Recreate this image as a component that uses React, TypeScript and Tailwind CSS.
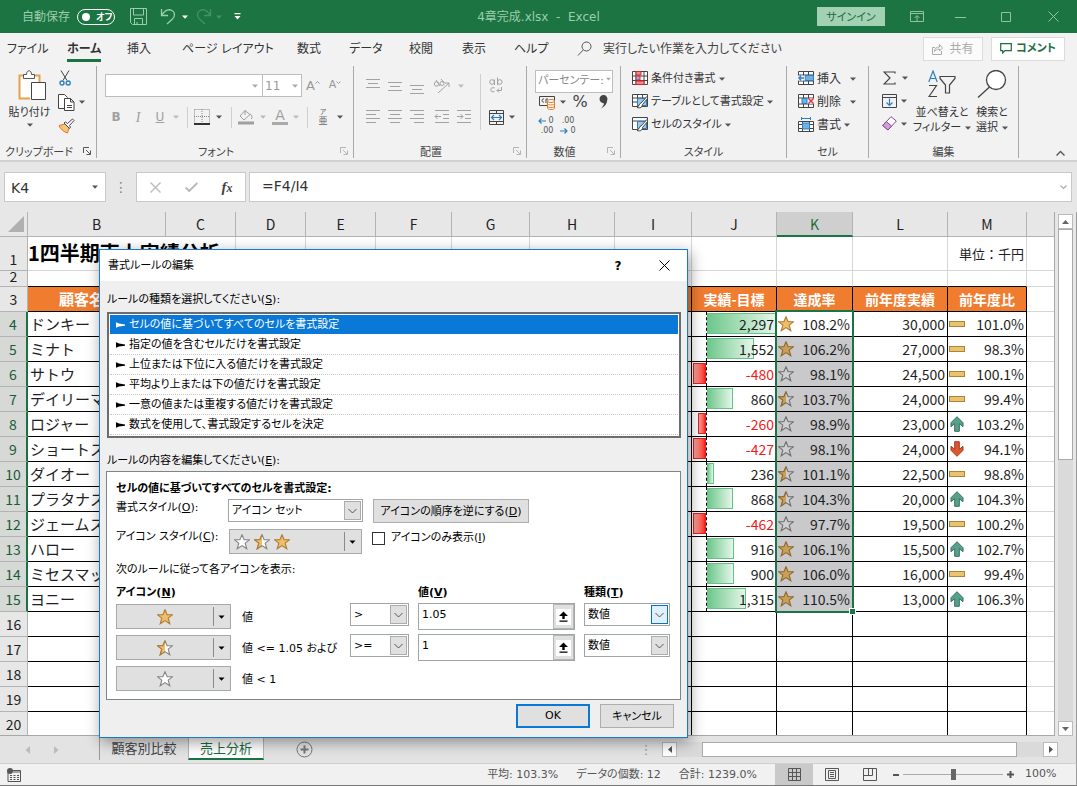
import React from "react";

const UI = "font-['DejaVu_Sans','Noto_Sans_CJK_JP',sans-serif] [font-feature-settings:'palt']";

/* ---------- small shared drawings ---------- */

function Caret({ color = "#555", size = 6 }: { color?: string; size?: number }) {
  return (
    <svg width={size} height="4" viewBox="0 0 6 4" aria-hidden="true" className="shrink-0">
      <path d="M0 0.5h6L3 3.8z" fill={color} />
    </svg>
  );
}

function CaretSlot({ w, color }: { w: string; color?: string }) {
  return (
    <span className={`flex shrink-0 items-center justify-center ${w}`}>
      <Caret color={color} />
    </span>
  );
}

function Slot({ w, label, children }: { w: string; label: string; children: React.ReactNode }) {
  return (
    <button type="button" aria-label={label} className={`flex shrink-0 items-center justify-center ${w}`}>
      {children}
    </button>
  );
}

const STAR = "M8 0.8l2.1 5h5.2l-4.1 3.4 1.6 5.6L8 11.6l-4.8 3.2 1.6-5.6L0.7 5.8h5.2z";

type StarKind = "full" | "half" | "empty";

function Star({ kind, dim = false }: { kind: StarKind; dim?: boolean }) {
  const gold = dim ? "#c9a057" : "#f0bd68";
  const edge = dim ? "#8f6a2c" : "#ad7c34";
  const pale = dim ? "#d0d0d2" : "#ffffff";
  const grey = dim ? "#6f6f70" : "#848484";
  return (
    <svg width="16" height="16" viewBox="0 0 16 16" aria-hidden="true" className="shrink-0">
      <path d={STAR} fill={kind === "full" ? gold : pale} stroke={kind === "full" ? edge : grey} strokeWidth="1.1" />
      {kind === "half" && (
        <>
          <path d="M8 0.8v10.8l-4.8 3.2 1.6-5.6L0.7 5.8h5.2z" fill={gold} />
          <path d="M8 0.8L5.9 5.8H0.7l4.1 3.4-1.6 5.6L8 11.6" fill="none" stroke={edge} strokeWidth="1.1" />
        </>
      )}
    </svg>
  );
}

type Trend = "flat" | "up" | "down";

function TrendIcon({ kind }: { kind: Trend }) {
  if (kind === "flat") {
    return (
      <svg width="16" height="16" viewBox="0 0 16 16" aria-hidden="true">
        <rect x="0.5" y="5.5" width="15" height="5" fill="#ebc26e" stroke="#a98538" />
      </svg>
    );
  }
  const up = kind === "up";
  return (
    <svg width="16" height="16" viewBox="0 0 16 16" aria-hidden="true">
      <path
        d={up ? "M8 0.7l6 6v4l-3.7-3v7.6H5.7V7.7l-3.7 3v-4z" : "M8 15.3l6-6v-4l-3.7 3V0.7H5.7v7.6l-3.7-3v4z"}
        fill={up ? "#58a08a" : "#dc5630"}
        stroke={up ? "#34705f" : "#a53a1c"}
      />
    </svg>
  );
}

/* ---------- title bar ---------- */

function TitleBar() {
  return (
    <header className="grid h-[33px] shrink-0 grid-cols-[1fr_auto_1fr] items-center bg-[#1c7442] text-[12px] text-[#9bcdae]">
      <div className="flex items-center pl-[22px]">
        <span className="w-[55px]">自動保存</span>
        <button
          type="button"
          role="switch"
          aria-checked="false"
          aria-label="自動保存"
          className="flex h-4 w-[38px] items-center rounded-full border border-white pl-1 text-white"
        >
          <span className="size-2 rounded-full bg-white" />
          <span className="ml-1.5 pt-0.5 text-[9px] font-bold leading-none">オフ</span>
        </button>
        <Slot w="ml-3.5 w-[18px]" label="上書き保存">
          <svg width="17" height="17" viewBox="0 0 17 17" fill="none" stroke="#9bcdae">
            <path d="M0.5 0.5h16v16h-14l-2-2zM3.5 0.5v6.5h10V0.5M4.5 16.5v-6h8v6M7 14v2.5" />
          </svg>
        </Slot>
        <Slot w="ml-3 w-[18px]" label="元に戻す">
          <svg width="16" height="17" viewBox="0 0 16 17" fill="none" stroke="#9bcdae" strokeWidth="1.3">
            <path d="M1.5 1v6.5H8M1.5 7.5C5 2 9 1 12 2.500c3.500 2 3 6 0.500 8.500L7 16" />
          </svg>
        </Slot>
        <CaretSlot w="w-4" color="#ffffff" />
        <Slot w="ml-0.5 w-[18px]" label="やり直し">
          <svg width="16" height="17" viewBox="0 0 16 17" fill="none" stroke="#46906a" strokeWidth="1.3">
            <path d="M14.500 1v6.500H8M14.500 7.500C11 2 7 1 4 2.500c-3.500 2-3 6-0.500 8.500L9 16" />
          </svg>
        </Slot>
        <CaretSlot w="w-3" color="#46906a" />
        <Slot w="ml-1 w-4" label="クイック アクセス ツール バーのユーザー設定">
          <svg width="7" height="7" viewBox="0 0 7 7">
            <path d="M0.500 0h6v1.200h-6zM0.500 3h6L3.500 6.500z" fill="#fff" />
          </svg>
        </Slot>
      </div>
      <h1 className="whitespace-pre">4章完成.xlsx  -  Excel</h1>
      <div className="flex items-center justify-end pr-2">
        <button type="button" className="mr-3 h-[19px] w-[68px] bg-[#a3d1b4] pt-0.5 text-[11px] leading-none text-[#1d6b3f]">
          サインイン
        </button>
        <Slot w="w-10" label="リボンの表示オプション">
          <svg width="14" height="11" viewBox="0 0 14 11" fill="none" stroke="#8fc4a3">
            <path d="M0.500 0.500h13v10H0.500zM0.500 2.500h13M7 10V5M4.500 7L7 4.500 9.500 7" />
          </svg>
        </Slot>
        <Slot w="w-[46px]" label="最小化">
          <svg width="11" height="11" viewBox="0 0 11 11" stroke="#8fc4a3">
            <path d="M0 6.500h11" />
          </svg>
        </Slot>
        <Slot w="w-[46px]" label="最大化">
          <svg width="10" height="10" viewBox="0 0 10 10" fill="none" stroke="#8fc4a3">
            <path d="M0.500 0.500h9v9h-9z" />
          </svg>
        </Slot>
        <Slot w="ml-2 w-8" label="閉じる">
          <svg width="11" height="11" viewBox="0 0 11 11" stroke="#8fc4a3">
            <path d="M0.500 0.500l10 10M10.500 0.500l-10 10" />
          </svg>
        </Slot>
      </div>
    </header>
  );
}

/* ---------- ribbon tabs ---------- */

const TABS = [
  { name: "ファイル", w: "w-[60px]" },
  { name: "ホーム", w: "w-[60px]", active: true },
  { name: "挿入", w: "w-[55px]" },
  { name: "ページ レイアウト", w: "w-[115px]" },
  { name: "数式", w: "w-[52px]" },
  { name: "データ", w: "w-[60px]" },
  { name: "校閲", w: "w-[53px]" },
  { name: "表示", w: "w-[52px]" },
  { name: "ヘルプ", w: "w-[63px]" },
];

function RibbonTabs() {
  return (
    <nav className="flex h-[33px] shrink-0 items-center bg-[#f2f2f3] pb-0.5 pl-[7px] text-[12px] text-[#333]">
      {TABS.map((t) => (
        <a key={t.name} href="#" className={`block shrink-0 whitespace-nowrap ${t.w}`}>
          <span
            className={
              t.active
                ? "inline-block border-b-[3px] border-[#1a7343] pt-[3px] font-bold leading-5"
                : "inline-block leading-[22px]"
            }
          >
            {t.name}
          </span>
        </a>
      ))}
      <svg width="16" height="16" viewBox="0 0 16 16" fill="none" stroke="#555" className="shrink-0">
        <circle cx="9.500" cy="5.500" r="4.500" />
        <path d="M6.200 9L1 14.500" />
      </svg>
      <span className="ml-2.5 whitespace-nowrap text-[#444]">実行したい作業を入力してください</span>
      <div className="ml-auto flex gap-2 pr-3">
        <button type="button" className="flex h-6 w-[60px] items-center justify-center gap-1.5 border border-[#dcdcdc] bg-[#fbfbfb] text-[12px] text-[#aaa]">
          <svg width="11" height="12" viewBox="0 0 11 12" fill="none" stroke="#aaa">
            <path d="M3 4.500H0.500v7h9V8M2.500 8.500c0-3 2-4.500 5-4.500V1.500L10.500 5 7.500 8V6C5 6 3.500 7 2.500 8.500z" />
          </svg>
          共有
        </button>
        <button type="button" className="flex h-6 w-[74px] items-center justify-center gap-1 border border-[#dcdcdc] bg-white text-[11px] font-bold text-[#1e6e42]">
          <svg width="12" height="11" viewBox="0 0 12 11" fill="none" stroke="#1e6e42" strokeWidth="1.200">
            <path d="M0.700 0.700h10.600v7H5L2.700 10V7.700h-2z" />
          </svg>
          <span className="pt-0.5">コメント</span>
        </button>
      </div>
    </nav>
  );
}

/* ---------- ribbon ---------- */

function Group({
  w,
  label,
  launcher,
  children,
}: {
  w: string;
  label: string;
  launcher?: "on" | "off";
  children: React.ReactNode;
}) {
  return (
    <section aria-label={label} className={`flex shrink-0 flex-col border-r border-[#a9a9a9] ${w}`}>
      <div className="h-[77px]">{children}</div>
      <div className="flex h-[15px] items-center text-[11px] leading-[15px] text-[#444]">
        <span className="flex-1 whitespace-nowrap pt-1 text-center">{label}</span>
        {launcher && (
          <button type="button" aria-label={`${label}の設定`} className="flex w-[18px] justify-center">
            <svg width="8" height="8" viewBox="0 0 8 8" fill="none" stroke={launcher === "on" ? "#555" : "#b5b5b5"}>
              <path d="M0.500 6V0.500H6M3 3l4 4M7.500 3.500v4h-4" />
            </svg>
          </button>
        )}
      </div>
    </section>
  );
}

function Lines({ d, color = "#a2a2a2" }: { d: string; color?: string }) {
  return (
    <svg width="16" height="16" viewBox="0 0 16 16" fill="none" stroke={color}>
      <path d={d} />
    </svg>
  );
}

const Sep = ({ w }: { w: string }) => (
  <span className={`flex shrink-0 justify-center ${w}`}>
    <span className="h-[21px] w-px bg-[#cfcfcf]" />
  </span>
);

function ClipboardGroup() {
  return (
    <Group w="w-[97px]" label="クリップボード" launcher="on">
      <div className="flex">
        <button type="button" className="flex w-[56px] flex-col items-center pl-[3px] pt-1 text-[11px] leading-[17px] text-[#333]">
          <svg width="28" height="32" viewBox="0 0 28 32" fill="none" className="ml-1">
            <path d="M12 28.500H1.500V5.500h20V13" stroke="#e8a04a" strokeWidth="2" fill="#fff" />
            <path d="M5.500 8.500v-4h3c0-5 5-5 5 0h3v4z" fill="#fff" stroke="#555" />
            <path d="M13.500 12.500h14v17h-14z" fill="#fff" stroke="#444" />
          </svg>
          <span className="mt-0.5 whitespace-nowrap">貼り付け</span>
          <span className="mt-0.5"><Caret /></span>
        </button>
        <div className="flex flex-col">
          <Slot w="h-6 w-[18px]" label="切り取り">
            <svg width="12" height="16" viewBox="0 0 12 16" fill="none">
              <path d="M2 0.500l6 10M10 0.500L4 10.500" stroke="#444" />
              <circle cx="3" cy="13" r="2" stroke="#2b7fc4" strokeWidth="1.400" />
              <circle cx="9.200" cy="13" r="2" stroke="#2b7fc4" strokeWidth="1.400" />
            </svg>
          </Slot>
          <div className="flex items-center">
            <Slot w="h-6 w-[20px]" label="コピー">
              <svg width="17" height="17" viewBox="0 0 17 17" fill="#fff" stroke="#444">
                <path d="M0.500 14.500V0.500h6l3 3v11z" />
                <path d="M6.500 4.500h6l3.500 3.500v8.500H6.500zM12.500 4.500v3.500H16M9 11.500h5M9 13.500h5" />
              </svg>
            </Slot>
            <CaretSlot w="w-3" />
          </div>
          <Slot w="h-6 w-[20px]" label="書式のコピー/貼り付け">
            <svg width="17" height="16" viewBox="0 0 17 16" fill="none">
              <path d="M1 7.500l6-1.500 4 4-1.500 5C6 14 2.500 11.500 1 7.500z" fill="#f7c27d" stroke="#e07b26" />
              <path d="M6 5l5.500 5.500 1-1.500-1-1.500L16 2.500 14.500 1 9.500 5.500 7.500 4z" fill="#fff" stroke="#444" />
            </svg>
          </Slot>
        </div>
      </div>
    </Group>
  );
}

function FontGroup() {
  return (
    <Group w="w-[257px]" label="フォント" launcher="off">
      <div className="flex flex-col gap-2 pl-2 pt-2">
        <div className="flex h-[23px] items-stretch text-[#999]">
          <div className="flex w-[158px] items-center border border-[#bdbdbd] bg-white">
            <input aria-label="フォント名" className="h-full w-[146px] bg-transparent px-1 text-[12px]" />
            <Caret color="#aaa" />
          </div>
          <div className="flex w-[39px] items-center border border-l-0 border-[#bdbdbd] bg-white">
            <input aria-label="フォント サイズ" defaultValue="11" className="h-full w-[29px] bg-transparent pl-0.5 text-[12px] text-[#999]" />
            <Caret color="#aaa" />
          </div>
          <Slot w="w-[22px]" label="フォント サイズの拡大">
            <span className="text-[13px]">A</span>
            <svg width="5" height="14" viewBox="0 0 5 14" fill="none" stroke="#999"><path d="M0.500 4.500l2-2 2 2" /></svg>
          </Slot>
          <Slot w="w-[22px]" label="フォント サイズの縮小">
            <span className="text-[11px]">A</span>
            <svg width="5" height="14" viewBox="0 0 5 14" fill="none" stroke="#999"><path d="M0.500 2.500l2 2 2-2" /></svg>
          </Slot>
        </div>
        <div className="flex h-6 items-center text-[12px] text-[#a0a0a0]">
          <Slot w="w-[22px]" label="太字"><b>B</b></Slot>
          <Slot w="w-[22px]" label="斜体"><i className="font-['Liberation_Serif',serif] text-[14px]">I</i></Slot>
          <Slot w="w-[22px]" label="下線"><u>U</u></Slot>
          <CaretSlot w="w-2.5" color="#bbb" />
          <Sep w="w-3" />
          <Slot w="w-[18px]" label="罫線">
            <svg width="16" height="16" viewBox="0 0 16 16" fill="none">
              <path d="M0.500 0.500h15v14M0.500 0.500v14M8 0v14M0 7.500h16" stroke="#888" strokeDasharray="1 1" />
              <path d="M0 15h16" stroke="#333" strokeWidth="2" />
            </svg>
          </Slot>
          <CaretSlot w="w-4" />
          <Sep w="w-2" />
          <Slot w="w-[22px]" label="塗りつぶしの色">
            <svg width="16" height="16" viewBox="0 0 16 16" fill="none" stroke="#a0a0a0">
              <path d="M7 1.500L2 7l4 4 6-5.500zM7 1v5M12 5c2 1 2.500 3 1.500 5" />
              <path d="M0 14h16" strokeWidth="3" />
            </svg>
          </Slot>
          <CaretSlot w="w-3" color="#bbb" />
          <Slot w="w-[22px] flex-col" label="フォントの色">
            <span className="text-[14px] leading-[13px]">A</span>
            <span className="h-[3px] w-4 bg-[#a9a9a9]" />
          </Slot>
          <CaretSlot w="w-2.5" color="#bbb" />
          <Sep w="w-3" />
          <Slot w="w-5 flex-col" label="ふりがなの表示">
            <span className="text-[7px] leading-[8px] text-[#666]">ア</span>
            <span className="text-[9px] leading-[10px] text-[#666]">亜</span>
          </Slot>
          <CaretSlot w="w-3.5" />
        </div>
      </div>
    </Group>
  );
}

function AlignGroup() {
  return (
    <Group w="w-[173px]" label="配置" launcher="off">
      <div className="flex pl-2 pt-2">
        <div className="flex w-[110px] flex-col gap-2">
          <div className="flex h-[23px] items-center">
            <Slot w="w-[22px]" label="上揃え"><Lines d="M1 1.500h14M3 5.500h10M1 9.500h14" /></Slot>
            <Slot w="w-[22px]" label="上下中央揃え"><Lines d="M1 4.500h14M3 8.500h10M1 12.500h14" /></Slot>
            <Slot w="w-[22px]" label="下揃え"><Lines d="M1 7.500h14M3 11.500h10M1 15.500h14" /></Slot>
            <Slot w="w-7" label="方向">
              <svg width="18" height="16" viewBox="0 0 18 16" fill="none" stroke="#a2a2a2">
                <circle cx="3.500" cy="6" r="2.200" />
                <path d="M3 2l4 6M8 1l3.500 4M5 15L16 5M16 9V5h-4" />
                <circle cx="9" cy="5.500" r="2" />
              </svg>
            </Slot>
            <CaretSlot w="w-2.5" color="#bbb" />
          </div>
          <div className="flex h-6 items-center">
            <Slot w="w-[22px]" label="左揃え"><Lines d="M1 1.500h14M1 5.500h10M1 9.500h14M1 13.500h10" /></Slot>
            <Slot w="w-[22px]" label="中央揃え"><Lines d="M1 1.500h14M3 5.500h10M1 9.500h14M3 13.500h10" /></Slot>
            <Slot w="w-[22px]" label="右揃え"><Lines d="M1 1.500h14M5 5.500h10M1 9.500h14M5 13.500h10" /></Slot>
            <Slot w="w-7" label="インデントを減らす"><Lines d="M1 1.500h14M9 5.500h6M9 9.500h6M1 13.500h14M7 7.500H1M3.500 5L1 7.500 3.500 10" /></Slot>
            <Slot w="w-4" label="インデントを増やす"><Lines d="M1 1.500h14M9 5.500h6M9 9.500h6M1 13.500h14M1 7.500h6M4.500 5L7 7.500 4.500 10" /></Slot>
          </div>
        </div>
        <span className="flex w-4 justify-center"><span className="h-[56px] w-px bg-[#cfcfcf]" /></span>
        <div className="flex flex-col gap-2">
          <Slot w="h-[23px] w-4" label="折り返して全体を表示する">
            <svg width="14" height="17" viewBox="0 0 14 17" fill="none" stroke="#a2a2a2">
              <circle cx="3" cy="5" r="2.300" />
              <path d="M5.500 2.500v5.500M8.500 0.500v7.500" />
              <circle cx="10.800" cy="5" r="2.300" />
              <path d="M5.500 11c-5-2-5 5.500 0 3.500M12.500 10v3.500H8M10 11.500l-2 2 2 2" />
            </svg>
          </Slot>
          <div className="flex h-6 items-center">
            <Slot w="w-4" label="セルを結合して中央揃え">
              <svg width="15" height="15" viewBox="0 0 15 15" fill="none">
                <path d="M0.500 0.500h14v14H0.500zM0.500 3.500h14M0.500 11.500h14M7.500 0.500v3M7.500 11.500v3" stroke="#444" />
                <path d="M2.500 7.500h10M5 5L2.500 7.500 5 10M10 5l2.500 2.500L10 10" stroke="#2b7fc4" strokeWidth="1.200" />
              </svg>
            </Slot>
            <CaretSlot w="w-4" />
          </div>
        </div>
      </div>
    </Group>
  );
}

function NumberGroup() {
  return (
    <Group w="w-[94px]" label="数値" launcher="off">
      <div className="flex flex-col pl-2 pt-px">
        <div className="relative h-[23px] w-[78px]">
          <select aria-label="表示形式" className="h-[23px] w-[78px] appearance-none overflow-hidden border border-[#bdbdbd] bg-white pl-0.5 pr-2 text-[11px] text-[#888]">
            <option>パーセンテー:</option>
          </select>
          <span className="pointer-events-none absolute right-0.5 top-2.5"><Caret color="#aaa" size={5} /></span>
        </div>
        <div className="flex h-6 items-center text-[#444]">
          <Slot w="w-6" label="通貨表示形式">
            <svg width="17" height="15" viewBox="0 0 17 15" fill="none">
              <path d="M0.500 1.500h15v9H0.500zM5 4c-2.500-1-2.500 4 0 3M7 8V4h2" stroke="#444" />
              <path d="M8.500 6v7c0 2 7 2 7 0V6M8.500 8.500c0 2 7 2 7 0M8.500 11c0 2 7 2 7 0" fill="#fff" stroke="#e07b26" />
              <ellipse cx="12" cy="6" rx="3.500" ry="1.500" fill="#fff" stroke="#e07b26" />
            </svg>
          </Slot>
          <CaretSlot w="w-2" />
          <Slot w="w-[26px]" label="パーセント スタイル"><span className="text-[16px]">%</span></Slot>
          <Slot w="w-5" label="桁区切りスタイル">
            <svg width="9" height="14" viewBox="0 0 8 12"><path d="M0.500 3.500a3.500 3.500 0 1 1 6.800 1C7 8 5 10.500 1.500 11.800 3.500 10 4.500 8.500 4.300 7A3.500 3.500 0 0 1 0.500 3.500z" fill="#444" /></svg>
          </Slot>
        </div>
        <div className="flex h-6 items-center text-[8px] leading-[10px] text-[#555]">
          <Slot w="w-[22px] flex-col" label="小数点以下の表示桁数を増やす">
            <span className="flex items-center gap-0.5">
              <svg width="8" height="6" viewBox="0 0 8 6" fill="none" stroke="#2b7fc4" strokeWidth="1.200"><path d="M8 3H1M3.500 0.500L1 3l2.500 2.500" /></svg>0
            </span>
            <span className="pl-0.5">.00</span>
          </Slot>
          <Slot w="w-[22px] flex-col" label="小数点以下の表示桁数を減らす">
            <span>.00</span>
            <span className="flex items-center gap-0.5">
              <svg width="8" height="6" viewBox="0 0 8 6" fill="none" stroke="#2b7fc4" strokeWidth="1.200"><path d="M0 3h7M4.500 0.500L7 3 4.500 5.500" /></svg>0
            </span>
          </Slot>
        </div>
      </div>
    </Group>
  );
}

function GridIcon({ kind }: { kind: "cond" | "table" | "style" | "insert" | "delete" | "format" }) {
  return (
    <svg width="16" height="15" viewBox="0 0 16 15" fill="none" className="shrink-0">
      {kind === "cond" && (
        <>
          <path d="M0.500 0.500h15v13H0.500zM0.500 5h15M0.500 9.500h15M4 0.500v13M12 0.500v13" fill="#fff" stroke="#444" />
          <path d="M4 0.500h5V4H4zM4 10h8v3.500H4z" fill="#f3868a" stroke="#d8272e" />
          <path d="M4 5h4v4H4z" fill="#7fb7e6" stroke="#d8272e" />
        </>
      )}
      {(kind === "table" || kind === "style") && (
        <>
          <path d="M0.500 0.500h15v12H0.500zM0.500 4h15" fill="#fff" stroke="#444" />
          {kind === "table" && <path d="M0.500 8h15M5.500 0.500v12M10.500 0.500v12" stroke="#444" />}
          <path d="M5.500 4.500h9v7h-9z" fill="#9cc8ec" stroke="#2b7fc4" />
          <path d="M15 2.500L9 9c-2 0.500-1.500 3-4 4.500 3 1 5.500 0 5.500-3L16 4z" fill="#fff" stroke="#444" />
        </>
      )}
      {kind === "insert" && (
        <>
          <path d="M0.500 0.500h15v13H0.500zM0.500 4h15M0.500 10h15M5.500 0.500v13M10.500 0.500v13" fill="#fff" stroke="#444" />
          <path d="M7 4.500h8.500v5H7z" fill="#6fb0e6" stroke="#2b7fc4" />
          <path d="M0 4.600h6.500v5H0z" fill="#f2f2f3" />
          <path d="M6 7H0.800M3.200 4.500L0.800 7l2.400 2.500" stroke="#2b7fc4" strokeWidth="1.300" />
        </>
      )}
      {kind === "delete" && (
        <>
          <path d="M0.500 0.500h15v13H0.500zM0.500 4h15M0.500 10h15M5.500 0.500v13M10.500 0.500v13" fill="#fff" stroke="#444" />
          <path d="M4 4.500h5v5H4z" fill="#6fb0e6" stroke="#2b7fc4" />
          <path d="M10 4.600h6v5h-6z" fill="#f2f2f3" />
          <path d="M10.500 4.500l5 5M15.500 4.500l-5 5" stroke="#e0343b" strokeWidth="1.400" />
        </>
      )}
      {kind === "format" && (
        <>
          <path d="M0.500 4.500h15v10H0.500zM0.500 7.500h15M0.500 11.500h15M4.500 4v10.500M11.500 4v10.500" fill="#fff" stroke="#444" />
          <path d="M4.500 6h7v6h-7z" fill="#6fb0e6" stroke="#2b7fc4" />
          <path d="M3.500 1.500h9M3.500 0v3M12.500 0v3" stroke="#2b7fc4" />
        </>
      )}
    </svg>
  );
}

function StyleGroup() {
  return (
    <Group w="w-[166px]" label="スタイル">
      <div className="flex flex-col pl-[11px] pt-px text-[11px] text-[#333]">
        {(
          [
            ["cond", "条件付き書式"],
            ["table", "テーブルとして書式設定"],
            ["style", "セルのスタイル"],
          ] as const
        ).map(([kind, name]) => (
          <button key={kind} type="button" className="flex h-[23px] items-center gap-[3px] whitespace-nowrap">
            <GridIcon kind={kind} />
            <span className="pt-0.5">{name}</span>
            <Caret />
          </button>
        ))}
      </div>
    </Group>
  );
}

function CellGroup() {
  return (
    <Group w="w-[82px]" label="セル">
      <div className="flex flex-col pl-[11px] pt-px text-[12px] text-[#333]">
        {(
          [
            ["insert", "挿入", "ml-1.5"],
            ["delete", "削除", "ml-1.5"],
            ["format", "書式", ""],
          ] as const
        ).map(([kind, name, gap]) => (
          <button key={kind} type="button" className="flex h-[23px] items-center gap-[3px] whitespace-nowrap">
            <GridIcon kind={kind} />
            <span>{name}</span>
            <span className={gap}><Caret /></span>
          </button>
        ))}
      </div>
    </Group>
  );
}

function EditGroup() {
  return (
    <Group w="w-[150px]" label="編集">
      <div className="flex pl-2.5">
        <div className="flex w-[34px] flex-col">
          <div className="flex h-[23px] items-center">
            <Slot w="w-5" label="オート SUM">
              <svg width="13" height="14" viewBox="0 0 13 14" fill="none" stroke="#444" strokeWidth="1.200">
                <path d="M12 2.500V1H1l6 6-6 6h11v-1.500" />
              </svg>
            </Slot>
            <CaretSlot w="w-3" />
          </div>
          <div className="flex h-[23px] items-center">
            <Slot w="w-5" label="フィル">
              <svg width="15" height="14" viewBox="0 0 15 14" fill="none">
                <path d="M0.500 0.500h14v13H0.500zM0.500 3.500h14" stroke="#444" />
                <path d="M7.500 4.500v7M4.500 8.500l3 3 3-3" stroke="#2b7fc4" strokeWidth="1.200" />
              </svg>
            </Slot>
            <CaretSlot w="w-2.5" />
          </div>
          <div className="flex h-[23px] items-center">
            <Slot w="w-5" label="クリア">
              <svg width="15" height="15" viewBox="0 0 15 15" fill="#fff" stroke="#8c4799">
                <path d="M9 0.700L14.300 5 6 14 0.700 9.500z" />
                <path d="M4.300 5.500L9.500 10 6 14 0.700 9.500z" fill="#cf9fd6" />
              </svg>
            </Slot>
            <CaretSlot w="w-2.5" />
          </div>
        </div>
        <button type="button" className="flex w-[58px] flex-col items-center pt-1 text-[11px] leading-[15px] text-[#333]">
          <svg width="28" height="28" viewBox="0 0 28 28" fill="none" strokeWidth="1.200">
            <path d="M0.800 12L5 1l4.200 11M2.200 8.500h5.600" stroke="#2b7fc4" />
            <path d="M1 15.500h7.500L1 26.500h8" stroke="#444" />
            <path d="M12 6.500h15v2l-5.500 6.500v8h-4v-8L12 8.500z" stroke="#444" />
          </svg>
          <span className="mt-[7px] whitespace-nowrap">並べ替えと</span>
          <span className="flex items-center gap-1 whitespace-nowrap">フィルター<Caret /></span>
        </button>
        <button type="button" className="flex w-[42px] flex-col items-center pt-1 text-[11px] leading-[15px] text-[#333]">
          <svg width="30" height="28" viewBox="0 0 30 28" fill="none" stroke="#444" strokeWidth="1.300">
            <circle cx="19" cy="10" r="9.500" fill="#fff" />
            <path d="M12.500 17L1 27.500" />
          </svg>
          <span className="mt-[7px] whitespace-nowrap">検索と</span>
          <span className="flex items-center gap-1 whitespace-nowrap">選択<Caret /></span>
        </button>
      </div>
    </Group>
  );
}

function Ribbon() {
  return (
    <div className="flex h-[96px] shrink-0 overflow-hidden border-b-2 border-[#cfd2cf] bg-[#f2f2f3] pb-0.5">
      <ClipboardGroup />
      <FontGroup />
      <AlignGroup />
      <NumberGroup />
      <StyleGroup />
      <CellGroup />
      <EditGroup />
      <button type="button" aria-label="リボンを折りたたむ" className="ml-auto self-end px-3 pb-0.5">
        <svg width="9" height="6" viewBox="0 0 9 6" fill="none" stroke="#555" strokeWidth="1.400"><path d="M0.500 5.500l4-4 4 4" /></svg>
      </button>
    </div>
  );
}

/* ---------- formula bar ---------- */

function FormulaBar() {
  return (
    <div className="flex h-[50px] shrink-0 items-start bg-[#e7e7e7] pl-1 pr-[5px] pt-2.5 text-[14px] text-[#333]">
      <div className="flex h-[30px] w-[102px] items-center border border-[#c9c9c9] bg-white">
        <input aria-label="名前ボックス" defaultValue="K4" className="h-full w-[86px] bg-transparent pl-1.5 pt-0.5" />
        <Caret size={8} />
      </div>
      <span className="flex h-[30px] w-[30px] items-center justify-center text-[#888]">⋮</span>
      <div className="flex h-[30px] w-[110px] items-center border border-[#c9c9c9] bg-white">
        <Slot w="w-9" label="キャンセル">
          <svg width="11" height="11" viewBox="0 0 11 11" stroke="#bbb" strokeWidth="1.400"><path d="M0.500 0.500l10 10M10.500 0.500l-10 10" /></svg>
        </Slot>
        <Slot w="w-9" label="入力">
          <svg width="13" height="10" viewBox="0 0 13 10" fill="none" stroke="#bbb" strokeWidth="2"><path d="M0.700 5.500l3.500 3.500L12.300 1" /></svg>
        </Slot>
        <Slot w="w-9" label="関数の挿入">
          <i className="font-['Liberation_Serif',serif] text-[15px] font-bold text-[#444]">f<span className="text-[12px]">x</span></i>
        </Slot>
      </div>
      <div className="ml-[3px] flex h-[30px] flex-1 items-center border border-[#c9c9c9] bg-white pr-1">
        <input aria-label="数式バー" defaultValue="=F4/I4" className="h-full flex-1 bg-transparent pb-0.5 pl-3" />
        <svg width="7" height="5" viewBox="0 0 7 5" fill="none" stroke="#aaa" strokeWidth="1.200"><path d="M0.500 0.500l3 3 3-3" /></svg>
      </div>
    </div>
  );
}

/* ---------- worksheet ---------- */

const COLS = [
  { name: "B", w: "w-[138px]" },
  { name: "C", w: "w-[70px]" },
  { name: "D", w: "w-[70px]" },
  { name: "E", w: "w-[70px]" },
  { name: "F", w: "w-[76px]" },
  { name: "G", w: "w-[78px]" },
  { name: "H", w: "w-[85px]" },
  { name: "I", w: "w-[77px]" },
  { name: "J", w: "w-[85px]" },
  { name: "K", w: "w-[76px]" },
  { name: "L", w: "w-[95px]" },
  { name: "M", w: "w-[79px]" },
];

type Row = { name: string; diff: number; star: StarKind; rate: string; prev: string; trend: Trend; ratio: string };

const ROWS: Row[] = [
  { name: "ドンキー", diff: 2297, star: "full", rate: "108.2%", prev: "30,000", trend: "flat", ratio: "101.0%" },
  { name: "ミナト", diff: 1552, star: "full", rate: "106.2%", prev: "27,000", trend: "flat", ratio: "98.3%" },
  { name: "サトウ", diff: -480, star: "empty", rate: "98.1%", prev: "24,500", trend: "flat", ratio: "100.1%" },
  { name: "デイリーマ", diff: 860, star: "half", rate: "103.7%", prev: "24,000", trend: "flat", ratio: "99.4%" },
  { name: "ロジャー", diff: -260, star: "empty", rate: "98.9%", prev: "23,000", trend: "up", ratio: "103.2%" },
  { name: "ショートス", diff: -427, star: "empty", rate: "98.1%", prev: "24,000", trend: "down", ratio: "94.1%" },
  { name: "ダイオー", diff: 236, star: "half", rate: "101.1%", prev: "22,500", trend: "flat", ratio: "98.8%" },
  { name: "プラタナス", diff: 868, star: "half", rate: "104.3%", prev: "20,000", trend: "up", ratio: "104.3%" },
  { name: "ジェームス", diff: -462, star: "empty", rate: "97.7%", prev: "19,500", trend: "flat", ratio: "100.2%" },
  { name: "ハロー", diff: 916, star: "full", rate: "106.1%", prev: "15,500", trend: "up", ratio: "102.7%" },
  { name: "ミセスマッ", diff: 900, star: "full", rate: "106.0%", prev: "16,000", trend: "flat", ratio: "99.4%" },
  { name: "ヨニー", diff: 1315, star: "full", rate: "110.5%", prev: "13,000", trend: "up", ratio: "106.3%" },
];

const LIGHT = "border-b border-r border-[#d4d8d4]";
const DARK = "border-b border-r border-black";
const HEAD = "border-b border-r border-[#b3b3b3] bg-[#e7e7e7] p-0 font-normal";
const BLANKS = ["C", "D", "E", "F", "G", "H", "I"];

function DiffCell({ value }: { value: number }) {
  const positive = value >= 0;
  const width = positive ? Math.round(value * 0.03) : Math.min(13, Math.round(-value * 0.031));
  return (
    <td className={`relative p-0 ${DARK}`}>
      <span className="absolute bottom-0 left-3.5 top-0 border-l border-dashed border-black" />
      {positive ? (
        <span
          className="absolute left-[15px] top-px h-[21px] border border-[#63c384] bg-linear-to-r from-[#6cc78b] to-[#e4f6ea]"
          style={{ width }}
        />
      ) : (
        <span
          className="absolute right-[70px] top-px h-[21px] border border-[#e02020] bg-linear-to-r from-[#f4a3a3] to-[#ff1414]"
          style={{ width }}
        />
      )}
      <span className={`relative block pr-0.5 text-right ${positive ? "" : "text-[#f01c1c]"}`}>
        {value.toLocaleString("en-US")}
      </span>
    </td>
  );
}

function Worksheet() {
  return (
    <div className="flex min-h-0 flex-1 overflow-hidden bg-[#e7e7e7] text-[14px] text-[#1e1e24]">
      <div className="min-w-0 flex-1 overflow-hidden border-b border-r border-[#a8a8a8] bg-white font-['Noto_Sans_CJK_JP',sans-serif] [font-feature-settings:normal]">
        <table className="w-full table-fixed border-separate border-spacing-0 leading-[22px]">
          <colgroup>
            <col className="w-7" />
            {COLS.map((c) => (
              <col key={c.name} className={c.w} />
            ))}
            <col />
          </colgroup>
          <thead>
            <tr className="h-[25px]">
              <th className={HEAD} aria-label="すべて選択">
                <svg width="18" height="17" viewBox="0 0 18 17" className="ml-auto mr-0.5"><path d="M17 0v16H1z" fill="#b0b0b0" /></svg>
              </th>
              {COLS.map((c) => (
                <th
                  key={c.name}
                  className={
                    c.name === "K"
                      ? "border-b-2 border-r border-b-[#1a7343] border-r-[#b3b3b3] bg-[#cfcfd0] p-0 font-normal text-[#1a6b40]"
                      : HEAD
                  }
                >
                  {c.name}
                </th>
              ))}
              <th className="border-b border-[#b3b3b3] bg-[#e7e7e7]" />
            </tr>
          </thead>
          <tbody>
            <tr className="h-[34px]">
              <th className={`${HEAD} pb-0.5 align-bottom leading-[18px]`}>1</th>
              <td colSpan={2} className={`whitespace-nowrap p-0 align-top text-[20px] font-bold leading-[32px] text-black ${LIGHT}`}>
                1四半期売上実績分析
              </td>
              {COLS.slice(2, 11).map((c) => (
                <td key={c.name} className={LIGHT} />
              ))}
              <td className={`whitespace-nowrap p-0 pr-0.5 text-right text-[13px] leading-5 ${LIGHT}`}>単位：千円</td>
              <td className="border-b border-[#d4d8d4]" />
            </tr>
            <tr className="h-4">
              <th className={`${HEAD} align-top leading-[10px]`}>2</th>
              {COLS.map((c) => (
                <td key={c.name} className="border-b border-r border-b-black border-r-[#d4d8d4] p-0" />
              ))}
              <td className="border-b border-[#d4d8d4] p-0" />
            </tr>
            <tr className="h-[25px] bg-[#f07c30] text-white">
              <th className={`${HEAD} text-[#1e1e24]`}>3</th>
              <th className={`p-0 pl-[31px] text-left text-[15px] ${DARK}`}>顧客名</th>
              {BLANKS.map((c) => (
                <td key={c} className={`p-0 ${DARK}`} />
              ))}
              {["実績-目標", "達成率", "前年度実績", "前年度比"].map((h) => (
                <th key={h} className={`whitespace-nowrap p-0 ${DARK}`}>{h}</th>
              ))}
              <td className="border-b border-[#d4d8d4] bg-white p-0" />
            </tr>
            {ROWS.map((r, i) => (
              <tr key={r.name} className="h-[25px]">
                <th className="border-b border-r-2 border-b-[#b3b3b3] border-r-[#1a7343] bg-[#d6d9d6] p-0 font-normal text-[#1a5c38]">
                  {i + 4}
                </th>
                <td className={`whitespace-nowrap p-0 pl-0.5 text-[15px] ${DARK}`}>{r.name}</td>
                {BLANKS.map((c) => (
                  <td key={c} className={`p-0 ${DARK}`} />
                ))}
                <DiffCell value={r.diff} />
                <td className={`relative p-0 ${DARK} ${i === 0 ? "" : "bg-[#c9c9cb]"}`}>
                  <div className="flex items-center justify-between pl-px pr-0.5">
                    <Star kind={r.star} dim={i > 0} />
                    <span>{r.rate}</span>
                  </div>
                  {i === 0 && (
                    <span className="pointer-events-none absolute -left-0.5 -top-0.5 z-10 h-[303px] w-[79px] border-2 border-[#1a7343]">
                      <span className="absolute -bottom-[3px] -right-[3px] size-[5px] bg-[#1a7343] outline outline-white" />
                    </span>
                  )}
                </td>
                <td className={`p-0 pr-0.5 text-right ${DARK}`}>{r.prev}</td>
                <td className={`p-0 ${DARK}`}>
                  <div className="flex items-center justify-between pl-px pr-0.5">
                    <TrendIcon kind={r.trend} />
                    <span>{r.ratio}</span>
                  </div>
                </td>
                <td className="border-b border-[#d4d8d4] p-0" />
              </tr>
            ))}
            {[16, 17, 18, 19, 20].map((n) => (
              <tr key={n} className="h-[25px]">
                <th className={HEAD}>{n}</th>
                {COLS.map((c) => (
                  <td key={c.name} className={`p-0 ${DARK}`} />
                ))}
                <td className="border-b border-[#d4d8d4] p-0" />
              </tr>
            ))}
          </tbody>
        </table>
      </div>
      <div className="flex w-[22px] shrink-0 flex-col items-center border-r border-[#9c9c9c] pt-0.5">
        <button type="button" aria-label="上へスクロール" className="flex h-[15px] w-[15px] shrink-0 items-center justify-center border border-[#bbb] bg-white">
          <svg width="7" height="4" viewBox="0 0 7 4"><path d="M0 4l3.500-4L7 4z" fill="#666" /></svg>
        </button>
        <div className="w-[15px] flex-1 bg-[#dadada]">
          <div className="h-[47%] border border-[#aaa] bg-white" />
        </div>
        <button type="button" aria-label="下へスクロール" className="flex h-[15px] w-[15px] shrink-0 items-center justify-center border border-[#bbb] bg-white">
          <svg width="7" height="4" viewBox="0 0 7 4"><path d="M0 0l3.500 4L7 0z" fill="#666" /></svg>
        </button>
      </div>
    </div>
  );
}

/* ---------- sheet tabs and status bar ---------- */

function SheetBar() {
  return (
    <div className="flex h-[27px] shrink-0 items-center border-r border-[#9c9c9c] bg-[#e3e3e4] text-[13px] text-[#444]">
      <div className="flex w-[99px] shrink-0 gap-[22px] pl-[25px] text-[#b8b8b8]">
        <svg width="6" height="8" viewBox="0 0 6 8"><path d="M5 0v8L0.500 4z" fill="#bbb" /></svg>
        <svg width="6" height="8" viewBox="0 0 6 8"><path d="M1 0v8l4.500-4z" fill="#bbb" /></svg>
      </div>
      <button type="button" className="h-[24px] w-[89px] self-start border-l border-[#999] pt-0.5 leading-[22px]">顧客別比較</button>
      <button type="button" className="h-[24px] w-[76px] self-start border-x border-b-2 border-x-[#b5b5b5] border-b-[#1a7343] bg-white pt-0.5 leading-[22px] text-[#1a6b40]">売上分析</button>
      <button type="button" aria-label="新しいシート" className="ml-8">
        <svg width="17" height="17" viewBox="0 0 17 17" fill="none" stroke="#777"><circle cx="8.500" cy="8.500" r="7.500" /><path d="M8.500 4.500v8M4.500 8.500h8" strokeWidth="2" /></svg>
      </button>
      <span className="ml-auto w-4 text-center text-[#999]">⋮</span>
      <div className="ml-2 mr-[18px] flex h-[15px] w-[396px]">
        <button type="button" aria-label="左へスクロール" className="flex w-[15px] items-center justify-center border border-[#bbb] bg-white">
          <svg width="4" height="7" viewBox="0 0 4 7"><path d="M4 0v7L0 3.500z" fill="#555" /></svg>
        </button>
        <div className="flex-1 bg-[#dadada] pl-[25px] pr-[26px]">
          <div className="h-[15px] border border-[#aaa] bg-white" />
        </div>
        <button type="button" aria-label="右へスクロール" className="flex w-[15px] items-center justify-center border border-[#bbb] bg-white">
          <svg width="4" height="7" viewBox="0 0 4 7"><path d="M0 0v7l4-3.500z" fill="#555" /></svg>
        </button>
      </div>
    </div>
  );
}

function StatusBar() {
  return (
    <footer className="flex h-[23px] shrink-0 items-center border-b border-r border-t border-b-[#777] border-r-[#9c9c9c] border-t-[#d0d0d0] bg-[#f1f1f1] text-[11px] text-[#555]">
      <svg width="14" height="14" viewBox="0 0 14 14" fill="none" className="ml-[7px]">
        <path d="M1 4v9.500h12.500V2.500H6" stroke="#555" />
        <circle cx="3" cy="3" r="3" fill="#555" />
        <path d="M6 4h7M3 7.500h2M6.500 7.500h2M10 7.500h2M3 9.500h2M6.500 9.500h2M10 9.500h2M3 11.500h2M6.500 11.500h2M10 11.500h2" stroke="#555" />
      </svg>
      <div className="ml-auto flex gap-[18px] pr-[18px] pt-0.5">
        <span>平均: 103.3%</span>
        <span>データの個数: 12</span>
        <span>合計: 1239.0%</span>
      </div>
      <Slot w="h-full w-[38px] bg-[#c9c9c9]" label="標準">
        <svg width="13" height="13" viewBox="0 0 13 13" fill="none" stroke="#555"><path d="M0.500 0.500h12v12H0.500zM0.500 4.500h12M0.500 8.500h12M4.500 0.500v12M8.500 0.500v12" /></svg>
      </Slot>
      <Slot w="w-[38px]" label="ページ レイアウト">
        <svg width="14" height="13" viewBox="0 0 14 13" fill="none" stroke="#555"><path d="M0.500 0.500h13v12H0.500zM3.500 2.500h7v8h-7zM5 4.500h4M5 6.500h4M5 8.500h4" /></svg>
      </Slot>
      <Slot w="w-[38px]" label="改ページ プレビュー">
        <svg width="14" height="13" viewBox="0 0 14 13" fill="none" stroke="#555"><path d="M0.500 0.500h13v12H0.500zM5.500 0.500v7M9.500 0.500v7M0.500 7.500h9" /></svg>
      </Slot>
      <Slot w="w-3.5" label="縮小"><span className="h-0.5 w-1.5 bg-[#555]" /></Slot>
      <span className="relative flex w-[100px] items-center">
        <span className="absolute left-0 right-0 h-px bg-[#aaa]" />
        <input
          type="range"
          aria-label="ズーム"
          defaultValue={50}
          className="relative h-3 w-full appearance-none bg-transparent [&::-webkit-slider-thumb]:h-[11px] [&::-webkit-slider-thumb]:w-[5px] [&::-webkit-slider-thumb]:appearance-none [&::-webkit-slider-thumb]:bg-[#666]"
        />
      </span>
      <Slot w="w-3.5" label="拡大">
        <svg width="7" height="7" viewBox="0 0 7 7" stroke="#555" strokeWidth="2"><path d="M0 3.500h7M3.500 0v7" /></svg>
      </Slot>
      <span className="ml-2 mr-[19px] w-8 whitespace-nowrap">100%</span>
    </footer>
  );
}

/* ---------- dialog ---------- */

const RULES = [
  "セルの値に基づいてすべてのセルを書式設定",
  "指定の値を含むセルだけを書式設定",
  "上位または下位に入る値だけを書式設定",
  "平均より上または下の値だけを書式設定",
  "一意の値または重複する値だけを書式設定",
  "数式を使用して、書式設定するセルを決定",
];

function Combo({ id, label, value, w, hot = false }: { id: string; label?: string; value: string; w: string; hot?: boolean }) {
  return (
    <div className={`relative h-[23px] ${w}`}>
      <select
        id={id}
        aria-label={label}
        className="h-[23px] w-full appearance-none border border-[#a0a5a8] bg-white pl-[3px] pr-5 text-[11px] text-black"
      >
        <option>{value}</option>
      </select>
      <span
        className={`pointer-events-none absolute bottom-0.5 right-0.5 top-0.5 flex w-[17px] items-center justify-center border ${
          hot ? "border-[#0a70c8] bg-[#e0f0fb]" : "border-[#adadad] bg-[#e0e0e0]"
        }`}
      >
        <svg width="9" height="6" viewBox="0 0 9 6" fill="none" stroke="#555"><path d="M0.500 1l4 4 4-4" /></svg>
      </span>
    </div>
  );
}

function IconDrop({ label, w, children }: { label: string; w: string; children: React.ReactNode }) {
  return (
    <button type="button" aria-label={label} className={`flex h-[25px] items-center border border-[#a5a9a7] bg-[#e0e0e0] ${w}`}>
      <span className="flex flex-1">{children}</span>
      <span className="h-[19px] w-px bg-[#8a8a8a]" />
      <span className="flex w-4 justify-center pr-0.5"><Caret color="#000" size={7} /></span>
    </button>
  );
}

function ValueBox({ id, value }: { id: string; value: string }) {
  return (
    <div className="flex h-[27px] w-[157px] border border-[#a0a5a8] bg-white">
      <input id={id} aria-label="値" defaultValue={value} className="min-w-0 flex-1 bg-transparent pb-1 pl-[3px] text-[11px] text-black" />
      <button type="button" aria-label="セル範囲の選択" className="flex w-[21px] items-center justify-center border border-[#b5b5b5] bg-[#e0e0e0]">
        <span className="flex h-4 w-[15px] items-center justify-center bg-white">
          <svg width="9" height="11" viewBox="0 0 9 11"><path d="M4.500 0.500L9 5H5.700v3H3.300V5H0zM0.500 9.500h8v1.200h-8z" fill="#000" /></svg>
        </span>
      </button>
    </div>
  );
}

function Dialog() {
  return (
    <div
      role="dialog"
      aria-label="書式ルールの編集"
      className="absolute left-[99px] top-[249px] z-20 flex h-[489px] w-[589px] flex-col border border-[#1979ca] bg-[#efeff0] text-[11px] leading-4 text-black shadow-[2px_4px_14px_rgba(0,0,0,0.4)]"
    >
      <div className="flex h-[31px] items-center bg-white pl-2">
        <h2>書式ルールの編集</h2>
        <button type="button" aria-label="ヘルプ" className="ml-auto w-[46px] text-center text-[12px] font-bold">?</button>
        <button type="button" aria-label="閉じる" className="flex w-[46px] justify-center">
          <svg width="11" height="11" viewBox="0 0 11 11" stroke="#000"><path d="M0.500 0.500l10 10M10.500 0.500l-10 10" /></svg>
        </button>
      </div>
      <div className="flex flex-1 flex-col px-[6px] pt-[11px]">
        <p className="pl-px">ルールの種類を選択してください(<u>S</u>):</p>
        <ul className="ml-px mt-1 h-[126px] border-2 border-[#6b6e70] bg-white p-px">
          {RULES.map((r, i) => (
            <li
              key={r}
              className={`flex h-5 items-center gap-1 whitespace-nowrap border-b pl-1.5 pt-px ${
                i === 0 ? "border-white bg-[#0a78d6] text-white" : "border-dotted border-[#c8c8c8]"
              }`}
            >
              <svg width="9" height="6" viewBox="0 0 9 6"><path d="M0 0.300L3 1.500 9 2.500v1.300L3 4.500 0 5.700z" fill="currentColor" /></svg>
              {r}
            </li>
          ))}
        </ul>
        <p className="mt-[15px] pl-px">ルールの内容を編集してください(<u>E</u>):</p>
        <div className="mt-0.5 h-[229px] border border-[#7d8588] bg-white pl-[9px] pt-[9px]">
          <p className="font-bold">セルの値に基づいてすべてのセルを書式設定:</p>
          <div className="mt-0.5 flex items-start">
            <label htmlFor="fmt" className="w-[112px] pt-px">書式スタイル(<u>O</u>):</label>
            <Combo id="fmt" value="アイコン セット" w="w-[135px]" />
            <button type="button" className="ml-2.5 h-6 w-[156px] whitespace-nowrap border border-[#adadad] bg-[#e0e0e0] pt-0.5">
              アイコンの順序を逆にする(<u>D</u>)
            </button>
          </div>
          <div className="mt-1.5 flex items-start">
            <span className="w-[113px]">アイコン スタイル(<u>C</u>):</span>
            <IconDrop label="アイコン スタイル" w="w-[133px]">
              <span className="flex gap-1 pl-1"><Star kind="empty" /><Star kind="half" /><Star kind="full" /></span>
            </IconDrop>
            <label className="ml-2.5 flex items-center gap-1.5 whitespace-nowrap pt-px">
              <input type="checkbox" className="size-[13px] appearance-none border border-[#333] bg-white" />
              <span>アイコンのみ表示(<u>I</u>)</span>
            </label>
          </div>
          <p className="mt-2">次のルールに従って各アイコンを表示:</p>
          <div className="mt-[7px] grid grid-cols-[126px_108px_68px_166px_86px] font-bold">
            <span>アイコン(<u>N</u>)</span>
            <span />
            <span />
            <label htmlFor="v1">値(<u>V</u>)</label>
            <label htmlFor="t1">種類(<u>T</u>)</label>
          </div>
          <div className="mt-0.5 grid grid-cols-[126px_108px_68px_166px_86px] auto-rows-[31px] items-start">
            <div className="pt-px"><IconDrop label="アイコン 1" w="w-[115px]"><span className="flex flex-1 justify-center"><Star kind="full" /></span></IconDrop></div>
            <span className="pt-[7px]">値</span>
            <Combo id="o1" label="比較 1" value=">" w="w-[59px]" />
            <ValueBox id="v1" value="1.05" />
            <Combo id="t1" value="数値" w="w-[86px]" hot />
            <div className="pt-px"><IconDrop label="アイコン 2" w="w-[115px]"><span className="flex flex-1 justify-center"><Star kind="half" /></span></IconDrop></div>
            <span className="whitespace-nowrap pt-[7px]">値 &lt;= 1.05 および</span>
            <Combo id="o2" label="比較 2" value=">=" w="w-[59px]" />
            <ValueBox id="v2" value="1" />
            <Combo id="t2" label="種類 2" value="数値" w="w-[86px]" />
            <div className="pt-px"><IconDrop label="アイコン 3" w="w-[115px]"><span className="flex flex-1 justify-center"><Star kind="empty" /></span></IconDrop></div>
            <span className="pt-[7px]">値 &lt; 1</span>
          </div>
        </div>
        <div className="mt-1 flex justify-end gap-2.5 pr-[7px]">
          <button type="button" className="h-6 w-[74px] border-2 border-[#0a78d6] bg-[#e0e0e0]">OK</button>
          <button type="button" className="h-6 w-[74px] border border-[#adadad] bg-[#e0e0e0] pt-0.5">キャンセル</button>
        </div>
      </div>
    </div>
  );
}

export default function App() {
  return (
    <div className={`relative flex h-screen flex-col overflow-hidden bg-[#e7e7e7] ${UI}`}>
      <TitleBar />
      <RibbonTabs />
      <Ribbon />
      <FormulaBar />
      <Worksheet />
      <SheetBar />
      <StatusBar />
      <Dialog />
    </div>
  );
}
